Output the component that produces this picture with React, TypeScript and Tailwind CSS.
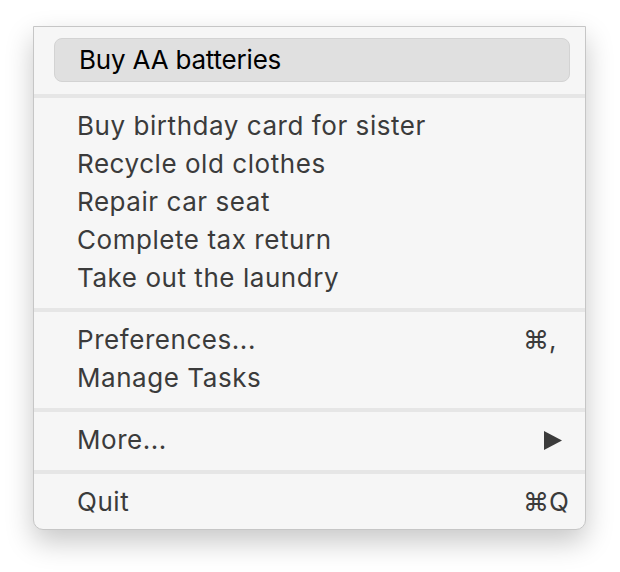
import React from "react";

function Item({ label, shortcut, arrow }: { label: string; shortcut?: string; arrow?: boolean }) {
  return (
    <div className="h-[38px] flex items-center pl-[43px] text-[#3b3b3b]">
      <span className="flex-1 tracking-[0.55px]">{label}</span>
      {shortcut && <span className="w-[62px]">{shortcut}</span>}
      {arrow && (
        <span className="w-[62px] flex justify-end pr-[23px]">
          <svg width="18" height="19" viewBox="0 0 18 19">
            <polygon points="0,0 18,9.5 0,19" fill="#3b3b3b" />
          </svg>
        </span>
      )}
    </div>
  );
}

function Sep() {
  return <div className="h-[4px] bg-[#e6e6e6]" />;
}

export default function App() {
  return (
    <div className="w-[620px] h-[572px] bg-white pt-[26px] pl-[33px]">
      <div
        className="w-[553px] bg-[#f6f6f6] border border-[#c6c6c6] rounded-b-[10px] shadow-[0_12px_28px_rgba(0,0,0,0.22)] text-[26px] leading-none"
        style={{ fontFamily: 'Inter, "Liberation Sans", Arial, sans-serif' }}
      >
        <div className="pt-[11px] pb-[12px] pl-[20px] pr-[15px]">
          <div className="h-[44px] flex items-center pl-[24px] bg-[#e0e0e0] border border-[#d3d3d3] rounded-[8px] text-black tracking-[-0.2px]">
            Buy AA batteries
          </div>
        </div>
        <Sep />
        <div className="pt-[9px] pb-[11px]">
          <Item label="Buy birthday card for sister" />
          <Item label="Recycle old clothes" />
          <Item label="Repair car seat" />
          <Item label="Complete tax return" />
          <Item label="Take out the laundry" />
        </div>
        <Sep />
        <div className="pt-[9px] pb-[11px]">
          <Item label="Preferences..." shortcut="⌘," />
          <Item label="Manage Tasks" />
        </div>
        <Sep />
        <div className="pt-[9px] pb-[11px]">
          <Item label="More..." arrow />
        </div>
        <Sep />
        <div className="pt-[9px] pb-[8px]">
          <Item label="Quit" shortcut="⌘Q" />
        </div>
      </div>
    </div>
  );
}
